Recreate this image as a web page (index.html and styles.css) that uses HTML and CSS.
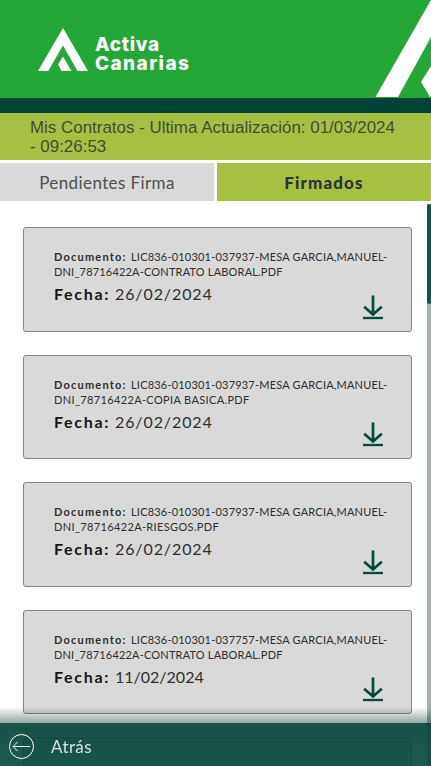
FILE: index.html
```
<!DOCTYPE html>
<html lang="es">
<head>
<meta charset="UTF-8">
<meta name="viewport" content="width=device-width, initial-scale=1.0">
<title>Activa Canarias - Mis Contratos</title>
<link rel="stylesheet" href="styles.css">
</head>
<body>
<svg class="sprite" aria-hidden="true">
  <symbol id="download" viewBox="0 0 20 25">
    <path d="M10 0.5V19M1.2 11.7L10 19.5L18.8 11.7" stroke-width="2.7"/>
    <path d="M0 23H20" stroke-width="2.3"/>
  </symbol>
</svg>
<div class="app">
  <header class="header">
    <svg class="logo" viewBox="0 0 50 44" width="50" height="44">
      <path d="M25 0L50 43H39.5L25 17.5L10.2 43H0Z"/>
      <path d="M25 28.5L33.5 43H23.5L20 36.5Z"/>
    </svg>
    <div class="brand">
      <span class="brand-top">Activa</span>
      <span class="brand-bottom">Canarias</span>
    </div>
    <svg class="header-mark" viewBox="0 0 56 98" width="56" height="98">
      <path d="M56 0V37L23 97H0.5Z"/>
      <path d="M56 66V97H55L46 82Z"/>
    </svg>
  </header>
  <div class="update">Mis Contratos - Ultima Actualización: 01/03/2024 - 09:26:53</div>
  <div class="tabs">
    <a class="tab">Pendientes Firma</a>
    <a class="tab active">Firmados</a>
  </div>
  <main class="list">
    <article class="card">
      <p class="doc"><b>Documento:</b><span class="name">LIC836-010301-037937-MESA GARCIA,MANUEL-</span><br><span class="file">DNI_78716422A-CONTRATO LABORAL.PDF</span></p>
      <p class="date"><b>Fecha:</b><span>26/02/2024</span></p>
      <svg class="download"><use href="#download"/></svg>
    </article>
    <article class="card">
      <p class="doc"><b>Documento:</b><span class="name">LIC836-010301-037937-MESA GARCIA,MANUEL-</span><br><span class="file wide">DNI_78716422A-COPIA BASICA.PDF</span></p>
      <p class="date"><b>Fecha:</b><span>26/02/2024</span></p>
      <svg class="download"><use href="#download"/></svg>
    </article>
    <article class="card">
      <p class="doc"><b>Documento:</b><span class="name">LIC836-010301-037937-MESA GARCIA,MANUEL-</span><br><span class="file wide">DNI_78716422A-RIESGOS.PDF</span></p>
      <p class="date"><b>Fecha:</b><span>26/02/2024</span></p>
      <svg class="download"><use href="#download"/></svg>
    </article>
    <article class="card">
      <p class="doc"><b>Documento:</b><span class="name">LIC836-010301-037757-MESA GARCIA,MANUEL-</span><br><span class="file">DNI_78716422A-CONTRATO LABORAL.PDF</span></p>
      <p class="date"><b>Fecha:</b><span class="narrow">11/02/2024</span></p>
      <svg class="download"><use href="#download"/></svg>
    </article>
    <article class="card"></article>
    <div class="scrollbar"><div class="thumb"></div></div>
  </main>
  <nav class="bottom-nav">
    <svg class="back" viewBox="0 0 26 26" width="26" height="26">
      <circle cx="13.5" cy="12.5" r="12"/>
      <path d="M22 12.5H5.500M9.500 8L5 12.5L9.500 17"/>
    </svg>
    <span>Atrás</span>
  </nav>
</div>
</body>
</html>
```
FILE: styles.css
```
* {
  box-sizing: border-box;
}

body {
  margin: 0;
  font-family: Lato, sans-serif;
  color: #2f2f2f;
  background: #fff;
}

.sprite {
  display: none;
}

.app {
  height: 100vh;
  display: flex;
  flex-direction: column;
  overflow: hidden;
}

.header {
  flex: none;
  height: 113px;
  display: flex;
  align-items: flex-start;
  background: #25a737;
  border-bottom: 15px solid #004438;
}

.logo {
  margin: 28px 0 0 38px;
  fill: #fff;
}

.brand {
  margin: 35px 0 0 7px;
  display: flex;
  flex-direction: column;
  color: #fff;
  font-family: Inter, sans-serif;
  font-size: 19px;
  font-weight: 800;
  line-height: 19px;
  white-space: nowrap;
}

.brand-top {
  letter-spacing: 0.7px;
}

.brand-bottom {
  letter-spacing: 1.4px;
}

.header-mark {
  margin-left: auto;
  fill: #fff;
}

.update {
  flex: none;
  height: 47px;
  padding: 5px 30px;
  background: #a5c043;
  color: #464b35;
  font: 16.93px/19px "Liberation Sans", Arial, sans-serif;
}

.tabs {
  flex: none;
  display: flex;
  gap: 3px;
  padding-top: 3px;
}

.tab {
  flex: 1;
  height: 38px;
  line-height: 39px;
  text-align: center;
  font-size: 17px;
  letter-spacing: 0.4px;
  color: #505050;
  background: #d9d9d9;
}

.tab.active {
  background: #a5c043;
  color: #2f3330;
  font-weight: 900;
  letter-spacing: 1.1px;
}

.list {
  position: relative;
  flex: 1;
  min-height: 0;
  padding: 26px 19px 0 23px;
  overflow: hidden;
}

.card {
  position: relative;
  height: 104.5px;
  margin-bottom: 23px;
  padding: 21.4px 0 0 30px;
  background: #d9d9d9;
  border: 1px solid #858585;
  border-radius: 3px;
  white-space: nowrap;
}

.doc {
  margin: 0;
  font-size: 11px;
  line-height: 15px;
}

.doc b {
  display: inline-block;
  width: 77px;
  letter-spacing: 1.2px;
}

.name {
  letter-spacing: 0.2px;
}

.file {
  letter-spacing: 0.18px;
}

.file.wide {
  letter-spacing: 0.35px;
}

.date {
  margin: 3px 0 0;
  font-size: 16px;
  line-height: 24px;
  letter-spacing: 0.9px;
}

.date b {
  display: inline-block;
  width: 61px;
  color: #171717;
  letter-spacing: 1.7px;
}

.date .narrow {
  letter-spacing: 0;
}

.download {
  position: absolute;
  right: 28px;
  bottom: 11px;
  width: 20px;
  height: 25px;
  fill: none;
  stroke: #004b3b;
}

.scrollbar {
  position: absolute;
  top: 3px;
  right: 0;
  bottom: 0;
  width: 4px;
  background: #9bb3ae;
}

.thumb {
  height: 100px;
  background: #0b5549;
  border-radius: 2px;
}

.bottom-nav {
  position: fixed;
  left: 0;
  right: 0;
  bottom: 0;
  height: 43px;
  display: flex;
  align-items: center;
  gap: 17px;
  padding: 4px 8px 0;
  background: linear-gradient(rgba(0, 62, 51, 0.9), rgba(0, 70, 58, 0.89));
  color: #d5e0dd;
  font-size: 17px;
  letter-spacing: 0.4px;
}

/* fade above the bar */
.bottom-nav::before {
  content: "";
  position: absolute;
  left: 0;
  right: 0;
  bottom: 100%;
  height: 16px;
  background: linear-gradient(rgba(0, 45, 35, 0), rgba(0, 45, 35, 0.42));
}

.back {
  fill: none;
  stroke: #fff;
  stroke-width: 1;
}
```
